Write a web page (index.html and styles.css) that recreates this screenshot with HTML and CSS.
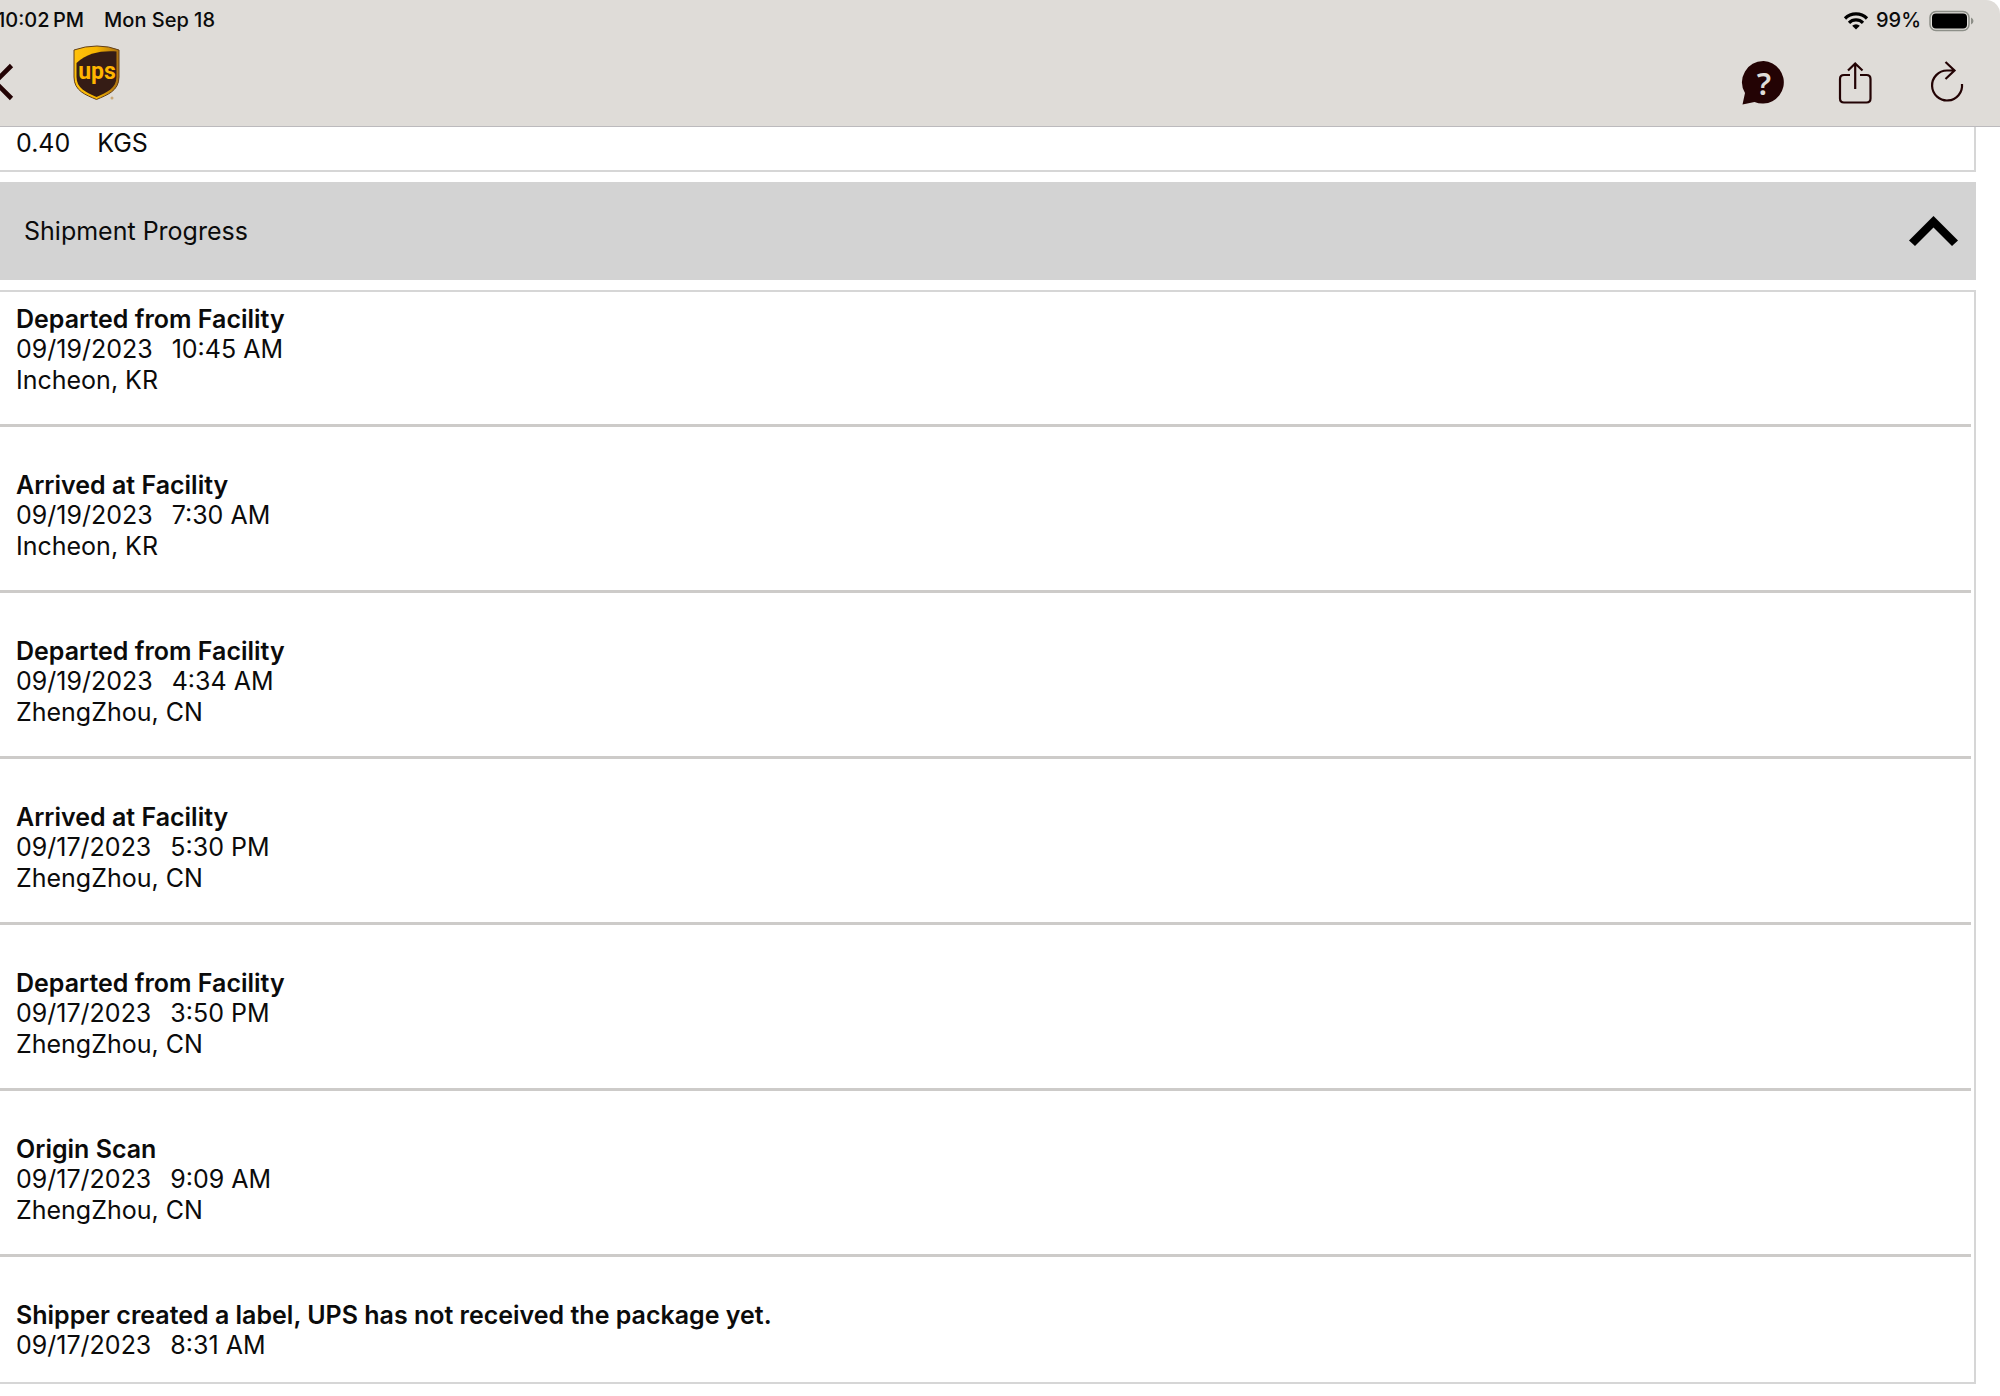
FILE: index.html
```
<!DOCTYPE html>
<html lang="en">
<head>
<meta charset="utf-8">
<meta name="viewport" content="width=device-width, initial-scale=1">
<title>Shipment Progress</title>
<link rel="stylesheet" href="styles.css">
</head>
<body>
<header class="header">
  <div class="status">
    <span class="status-time">10:02&#8201;PM</span>
    <span>Mon Sep 18</span>
    <span class="status-right">
      <svg width="24" height="18" viewBox="0 0 24 18" aria-hidden="true">
        <g fill="none" stroke="#000" stroke-width="3.200">
          <path d="M1 6.500A15.500 15.500 0 0 1 23 6.500"/>
          <path d="M5 10.800A9.800 9.800 0 0 1 19 10.800"/>
        </g>
        <path d="M12 17.500L8.200 13.700A5.400 5.400 0 0 1 15.800 13.700Z"/>
      </svg>
      <span>99%</span>
      <svg width="45" height="22" viewBox="0 0 45 22" aria-hidden="true">
        <rect x="1" y="1.500" width="39" height="19" rx="6" fill="none" stroke="#8d8f88" stroke-width="1.500"/>
        <rect x="3" y="3.500" width="35" height="15" rx="4"/>
        <path d="M42 7.500Q44.500 8.500 44.500 11T42 14.500Z" fill="#8d8f88"/>
      </svg>
    </span>
  </div>
  <nav class="toolbar">
    <button class="back" aria-label="Back">
      <svg width="24" height="38" viewBox="0 0 24 38" aria-hidden="true"><path d="M21.500 2.500L5 19L21.500 35.500" fill="none" stroke="#230304" stroke-width="4.600"/></svg>
    </button>
    <a class="logo" href="#" aria-label="UPS home">
      <svg width="48" height="56" viewBox="0 0 48 56" aria-hidden="true">
        <defs>
          <linearGradient id="gold" x1="0" y1="0" x2="1" y2="0"><stop offset="0" stop-color="#ffc20e"/><stop offset=".5" stop-color="#f7b500"/><stop offset="1" stop-color="#a96f12"/></linearGradient>
        </defs>
        <path d="M1 5Q12 1 24 1T46 5V32C46 46 34 50 23.500 54.500C13 50 1 46 1 32Z" fill="url(#gold)" stroke="#63401c" stroke-width="1"/>
        <path d="M3.500 18C14 8 28 5.500 43.500 6.500V32C43.500 43 34 47.500 23.500 52C13 47.500 3.500 43 3.500 32Z" fill="#351c15"/>
        <text class="logo-text" x="24" y="34" text-anchor="middle">ups</text>
        <circle cx="39" cy="53" r="1.500" fill="#c9a878"/>
      </svg>
    </a>
    <div class="actions">
      <button class="action" aria-label="Help">
        <svg width="43" height="44" viewBox="0 0 43 44" aria-hidden="true">
          <path d="M21.700 0A21.300 21.300 0 1 1 12.500 41L.5 43.500L3 32A21.300 21.300 0 0 1 21.700 0Z" fill="#230304"/>
          <text class="help-mark" x="22" y="34" text-anchor="middle">?</text>
        </svg>
      </button>
      <button class="action" aria-label="Share">
        <svg width="34" height="44" viewBox="0 0 34 44" fill="none" stroke="#230304" stroke-width="2.200" aria-hidden="true">
          <path d="M12 14H6Q2 14 2 18V37.500Q2 41.500 6 41.500H28.500Q32.500 41.500 32.500 37.500V18Q32.500 14 28.500 14H22M17.200 28V3M10 9.500L17.200 2.500L24.500 9.500"/>
        </svg>
      </button>
      <button class="action" aria-label="Refresh">
        <svg width="34" height="44" viewBox="0 0 34 44" fill="none" stroke="#230304" stroke-width="2.200" aria-hidden="true">
          <path d="M24.500 9.500H17A15 15 0 1 0 32 23M15.500 1L24.500 9.500L15.500 18"/>
        </svg>
      </button>
    </div>
  </nav>
</header>
<main class="content">
  <section class="card weight"><span>0.40</span><span>KGS</span></section>
  <h2 class="section-title">
    <button class="section-toggle" aria-expanded="true" aria-controls="progress">
      <span>Shipment Progress</span>
      <svg width="49" height="30" viewBox="0 0 49 30" aria-hidden="true"><path d="M24.500 0L49 24.500L43 30L24.500 11.500L6 30L0 24.500Z"/></svg>
    </button>
  </h2>
  <ol class="card progress" id="progress">
    <li class="event"><h3>Departed from Facility</h3><p class="when"><span>09/19/2023</span><span>10:45 AM</span></p><p>Incheon, KR</p></li>
    <li class="event"><h3>Arrived at Facility</h3><p class="when"><span>09/19/2023</span><span>7:30 AM</span></p><p>Incheon, KR</p></li>
    <li class="event"><h3>Departed from Facility</h3><p class="when"><span>09/19/2023</span><span>4:34 AM</span></p><p>ZhengZhou, CN</p></li>
    <li class="event"><h3>Arrived at Facility</h3><p class="when"><span>09/17/2023</span><span>5:30 PM</span></p><p>ZhengZhou, CN</p></li>
    <li class="event"><h3>Departed from Facility</h3><p class="when"><span>09/17/2023</span><span>3:50 PM</span></p><p>ZhengZhou, CN</p></li>
    <li class="event"><h3>Origin Scan</h3><p class="when"><span>09/17/2023</span><span>9:09 AM</span></p><p>ZhengZhou, CN</p></li>
    <li class="event"><h3>Shipper created a label, UPS has not received the package yet.</h3><p class="when"><span>09/17/2023</span><span>8:31 AM</span></p></li>
  </ol>
</main>
</body>
</html>
```
FILE: styles.css
```
* { box-sizing: border-box; }
body {
  margin: 0;
  background: #fff;
  color: #0b0b0b;
  font: 25px/31px Inter, "Liberation Sans", sans-serif;
  overflow-x: hidden;
}
h2, h3, p, ol { margin: 0; padding: 0; font-size: inherit; }
button { border: 0; padding: 0; background: none; color: inherit; font: inherit; }
svg { display: block; flex: none; overflow: visible; }

.header {
  background: #dfdcd8;
  border-bottom: 1px solid #bcbabd;
  border-top-right-radius: 14px;
}
.status {
  display: flex;
  align-items: center;
  gap: 20px;
  height: 41px;
  padding-right: 26px;
  font-size: 20px;
  font-weight: 500;
}
.status-time { margin-left: -3px; }
.status-right { display: flex; align-items: center; gap: 8px; margin-left: auto; }

.toolbar {
  display: flex;
  align-items: flex-start;
  height: 85px;
  padding-right: 29px;
}
.back { margin: 22px 0 0 -10px; }
.logo { margin: 4px 0 0 59px; }
.logo-text { font: bold 23px Roboto, "Liberation Sans", sans-serif; fill: #ffb500; }
.actions { display: flex; gap: 44px; margin: 20px 0 0 auto; }
.action { display: flex; justify-content: center; width: 48px; }
.help-mark { font: 600 31px "Noto Sans", sans-serif; fill: #dfdcd8; }

.content { padding-right: 24px; }
.card { border: 2px solid #d6d6d6; border-left: 0; padding-left: 16px; }
.weight {
  display: flex;
  gap: 27px;
  border-top: 0;
  padding-top: 1px;
  padding-bottom: 11px;
}
.section-title { margin: 10px 0; font-weight: 400; }
.section-toggle {
  display: flex;
  align-items: center;
  justify-content: space-between;
  width: 100%;
  height: 98px;
  padding: 0 18px 0 24px;
  background: #d3d3d3;
}
.progress { list-style: none; padding: 0 3px 0 0; }
.event {
  padding: 43px 0 28px 16px;
  border-bottom: 3px solid #cdcbc9;
}
.event:first-child { padding-top: 12px; }
.event:last-child { padding-bottom: 21px; border-bottom: 0; }
.event h3 { font-weight: 600; line-height: 30px; }
.when { display: flex; gap: 19px; }
```
